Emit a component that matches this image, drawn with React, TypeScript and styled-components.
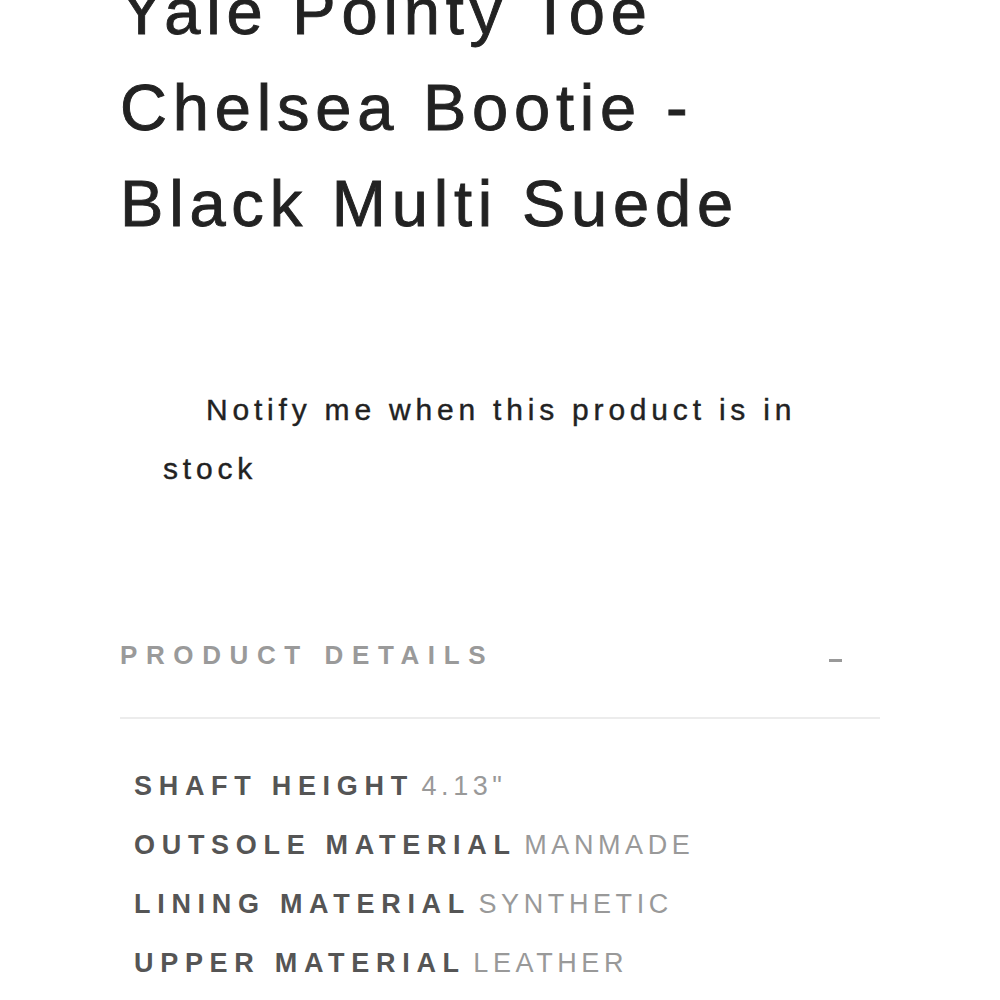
import React from "react";
import styled, { createGlobalStyle } from "styled-components";

const Global = createGlobalStyle`
  html, body { margin: 0; padding: 0; background: #fff; overflow: hidden; }
  body { font-family: "Liberation Sans", Arial, sans-serif; }
`;

const Page = styled.div`
  width: 760px;
  margin: 0 auto;
  padding: 0 120px;
  box-sizing: content-box;
`;

const Title = styled.h1`
  margin: -36px 0 0;
  font-size: 65px;
  line-height: 96px;
  font-weight: 400;
  letter-spacing: 5.8px;
  color: #222;
  -webkit-text-stroke: 0.9px #222;
`;

const Notify = styled.p`
  margin: 128px 0 0;
  padding-left: 43px;
  text-indent: 43px;
  font-size: 30px;
  line-height: 59px;
  letter-spacing: 4.8px;
  color: #222;
  -webkit-text-stroke: 0.4px #222;
  width: 660px;
`;

const Section = styled.section`
  margin-top: 140px;
`;

const Header = styled.div`
  display: flex;
  align-items: center;
  justify-content: space-between;
  padding-bottom: 45px;
  border-bottom: 2px solid #ececec;
`;

const HeaderTitle = styled.h2`
  margin: 0;
  font-size: 26px;
  line-height: 34px;
  font-weight: 700;
  letter-spacing: 8.6px;
  color: #9a9a9a;
`;

const Toggle = styled.span`
  display: block;
  width: 13px;
  height: 3px;
  background: #999;
  margin-right: 38px;
  margin-top: 10px;
`;

const List = styled.ul`
  list-style: none;
  margin: 38px 0 0;
  padding: 0 0 0 14px;
`;

const Row = styled.li`
  font-size: 27px;
  line-height: 59px;
  white-space: nowrap;
`;

const Label = styled.span`
  font-weight: 700;
  letter-spacing: 6.7px;
  color: #555;
`;

const Value = styled.span`
  font-weight: 400;
  letter-spacing: 4.6px;
  color: #999;
`;

const details = [
  ["SHAFT HEIGHT", "4.13\""],
  ["OUTSOLE MATERIAL", "MANMADE"],
  ["LINING MATERIAL", "SYNTHETIC"],
  ["UPPER MATERIAL", "LEATHER"],
];

export default function App() {
  return (
    <Page>
      <Global />
      <Title>Yale Pointy Toe Chelsea Bootie - Black Multi Suede</Title>
      <Notify>Notify me when this product is in stock</Notify>
      <Section>
        <Header>
          <HeaderTitle>PRODUCT DETAILS</HeaderTitle>
          <Toggle />
        </Header>
        <List>
          {details.map(([k, v]) => (
            <Row key={k}>
              <Label>{k}</Label> <Value>{v}</Value>
            </Row>
          ))}
        </List>
      </Section>
    </Page>
  );
}
